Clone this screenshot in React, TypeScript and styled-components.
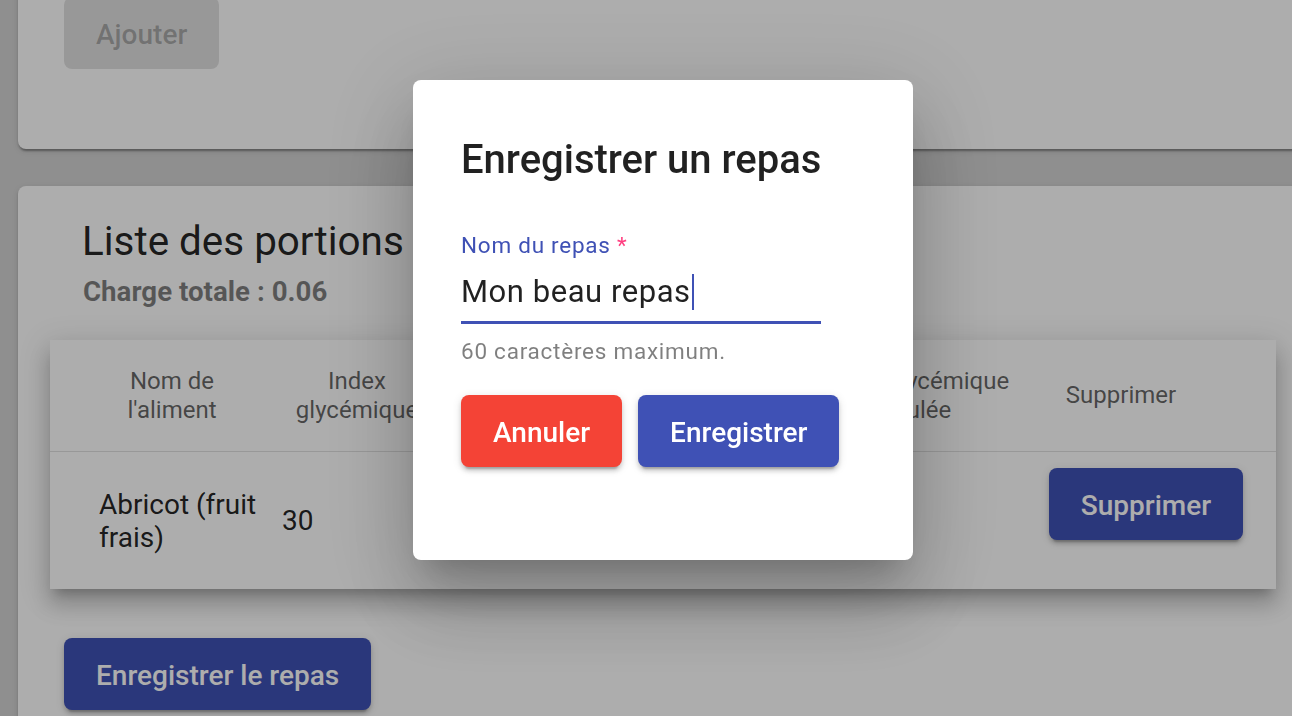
import React from "react";
import styled, { createGlobalStyle } from "styled-components";

const GlobalStyle = createGlobalStyle`
  html, body {
    margin: 0;
    padding: 0;
    overflow: hidden;
    background: #d3d3d3;
    font-family: Roboto, "Noto Sans", Arial, sans-serif;
    -webkit-font-smoothing: antialiased;
  }
  * { box-sizing: border-box; }
`;

const Page = styled.div`
  width: 1308px;
  height: 716px;
  padding-left: 18px;
  display: flex;
  flex-direction: column;
  gap: 37px;
`;

const Card = styled.section<{ $top?: number; $pt?: number; $pb?: number }>`
  background: #fff;
  border-radius: 8px;
  margin-top: ${(p) => p.$top ?? 0}px;
  padding: ${(p) => p.$pt ?? 32}px 32px ${(p) => p.$pb ?? 32}px;
  box-shadow: 0 4px 2px -2px rgba(0, 0, 0, 0.2), 0 2px 2px 0 rgba(0, 0, 0, 0.14),
    0 2px 6px 0 rgba(0, 0, 0, 0.12);
  display: flex;
  flex-direction: column;
  align-items: flex-start;
`;

const Button = styled.button<{ $color?: "primary" | "warn" | "disabled" }>`
  height: 72px;
  padding: 3px 32px 0;
  border: none;
  border-radius: 8px;
  font-family: Roboto, Arial, sans-serif;
  font-size: 28px;
  font-weight: 500;
  line-height: 69px;
  white-space: nowrap;
  cursor: pointer;
  color: ${(p) => (p.$color === "disabled" ? "rgba(0,0,0,0.26)" : "#fff")};
  background: ${(p) =>
    p.$color === "warn"
      ? "#f44336"
      : p.$color === "disabled"
      ? "rgba(0,0,0,0.12)"
      : "#3f51b5"};
  box-shadow: ${(p) =>
    p.$color === "disabled"
      ? "none"
      : "0 6px 2px -4px rgba(0,0,0,.2), 0 4px 4px 0 rgba(0,0,0,.14), 0 2px 10px 0 rgba(0,0,0,.12)"};
`;

const PageButton = styled(Button)`
  margin-left: 14px;
`;

const Title = styled.h2`
  margin: 0 0 8px 32px;
  font-size: 40.4px;
  line-height: 48px;
  font-weight: 400;
  color: rgba(0, 0, 0, 0.87);
`;

const Total = styled.div`
  margin: 0 0 30px 33px;
  font-size: 27.7px;
  line-height: 36px;
  font-weight: 700;
  color: rgba(0, 0, 0, 0.5);
`;

const Table = styled.div`
  width: 1226px;
  background: #fff;
  display: grid;
  grid-template-columns: 232px 150px 184px 184px 214px 262px;
  box-shadow: 0 10px 10px -6px rgba(0, 0, 0, 0.2), 0 16px 20px 2px rgba(0, 0, 0, 0.14),
    0 6px 28px 4px rgba(0, 0, 0, 0.12);
  margin-bottom: 49px;
`;

const HeadCell = styled.div<{ $pl?: number; $pr?: number }>`
  height: 112px;
  border-bottom: 1px solid rgba(0, 0, 0, 0.12);
  display: flex;
  align-items: center;
  justify-content: center;
  text-align: center;
  padding: 0 ${(p) => p.$pr ?? 0}px 0 ${(p) => p.$pl ?? 0}px;
  font-size: 24px;
  line-height: 29px;
  font-weight: 400;
  color: rgba(0, 0, 0, 0.62);
`;

const BodyCell = styled.div<{ $pl?: number; $center?: boolean }>`
  height: 137px;
  display: flex;
  align-items: center;
  justify-content: ${(p) => (p.$center ? "center" : "flex-start")};
  padding: 0 10px 0 ${(p) => p.$pl ?? 0}px;
  font-size: 28px;
  line-height: 33px;
  color: rgba(0, 0, 0, 0.87);
`;

const RowButton = styled(Button)`
  margin-bottom: 33px;
`;

const Backdrop = styled.div`
  position: fixed;
  inset: 0;
  background: rgba(0, 0, 0, 0.32);
`;

const Dialog = styled.div`
  position: fixed;
  left: 413px;
  top: 80px;
  width: 500px;
  height: 480px;
  padding: 48px;
  background: #fff;
  border-radius: 8px;
  box-shadow: 0 22px 30px -14px rgba(0, 0, 0, 0.2), 0 48px 76px 6px rgba(0, 0, 0, 0.14),
    0 18px 92px 16px rgba(0, 0, 0, 0.12);
  display: flex;
  flex-direction: column;
`;

const DialogTitle = styled.h2`
  margin: 0 0 40px;
  font-size: 40px;
  line-height: 64px;
  font-weight: 500;
  color: rgba(0, 0, 0, 0.87);
`;

const Field = styled.div`
  width: 360px;
  display: flex;
  flex-direction: column;
`;

const Label = styled.label`
  margin-top: 1px;
  font-size: 22.5px;
  letter-spacing: 0.75px;
  line-height: 24px;
  color: #3f51b5;
`;

const Required = styled.span`
  color: #ff4081;
`;

const InputLine = styled.div`
  margin-top: 15px;
  height: 40px;
  display: flex;
  align-items: center;
  font-size: 31px;
  letter-spacing: 0.55px;
  line-height: 40px;
  color: rgba(0, 0, 0, 0.87);
`;

const Caret = styled.span`
  display: inline-block;
  width: 2px;
  height: 36px;
  margin-left: 1px;
  background: #3f51b5;
`;

const Underline = styled.div`
  margin-top: 9px;
  height: 3px;
  background: #3f51b5;
`;

const Hint = styled.div`
  margin-top: 14px;
  font-size: 22.5px;
  letter-spacing: 0.75px;
  line-height: 26px;
  color: rgba(0, 0, 0, 0.5);
`;

const Actions = styled.div`
  margin-top: 31px;
  display: flex;
  gap: 16px;
`;

export default function App() {
  return (
    <>
      <GlobalStyle />
      <Page>
        <Card $top={-40} $pt={37} $pb={80}>
          <PageButton $color="disabled" disabled>
            Ajouter
          </PageButton>
        </Card>
        <Card>
          <Title>Liste des portions</Title>
          <Total>Charge totale : 0.06</Total>
          <Table>
            <HeadCell $pl={12}>
              Nom de
              <br />
              l'aliment
            </HeadCell>
            <HeadCell>
              Index
              <br />
              glycémique
            </HeadCell>
            <HeadCell>
              Quantité
              <br />
              (g)
            </HeadCell>
            <HeadCell>
              Glucides
              <br />
              (g)
            </HeadCell>
            <HeadCell>
              Charge glycémique
              <br />
              calculée
            </HeadCell>
            <HeadCell $pr={48}>Supprimer</HeadCell>
            <BodyCell $pl={49}>Abricot (fruit frais)</BodyCell>
            <BodyCell>30</BodyCell>
            <BodyCell>2</BodyCell>
            <BodyCell>0.2</BodyCell>
            <BodyCell>0.06</BodyCell>
            <BodyCell $center $pl={12}>
              <RowButton>Supprimer</RowButton>
            </BodyCell>
          </Table>
          <PageButton>Enregistrer le repas</PageButton>
        </Card>
      </Page>
      <Backdrop />
      <Dialog>
        <DialogTitle>Enregistrer un repas</DialogTitle>
        <Field>
          <Label>
            Nom du repas <Required>*</Required>
          </Label>
          <InputLine>
            Mon beau repas
            <Caret />
          </InputLine>
          <Underline />
          <Hint>60 caractères maximum.</Hint>
        </Field>
        <Actions>
          <Button $color="warn">Annuler</Button>
          <Button>Enregistrer</Button>
        </Actions>
      </Dialog>
    </>
  );
}
